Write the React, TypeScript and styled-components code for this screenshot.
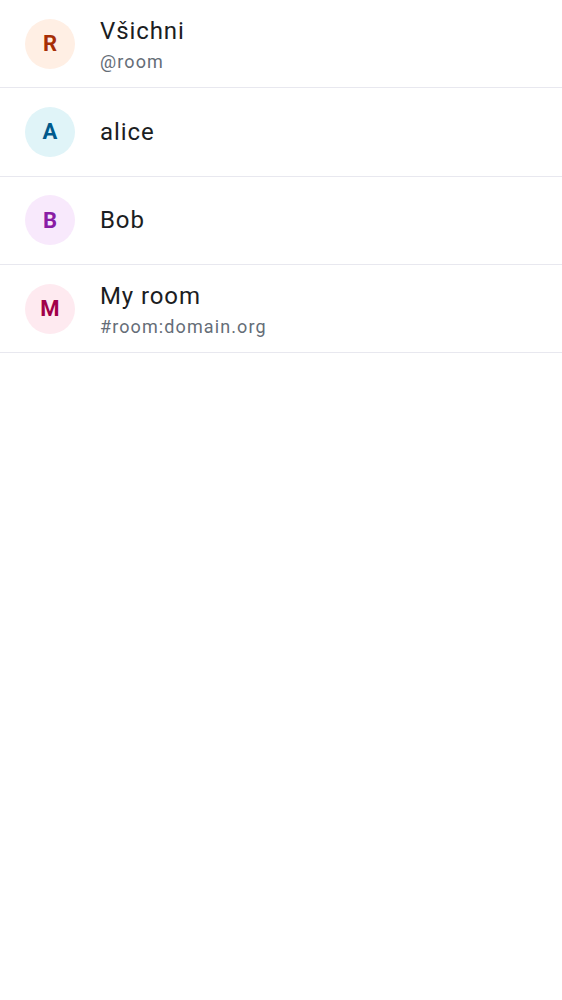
import React from "react";
import styled, { createGlobalStyle } from "styled-components";

const GlobalStyle = createGlobalStyle`
  body {
    margin: 0;
    background: #ffffff;
    font-family: Roboto, "Noto Sans", sans-serif;
  }
`;

const List = styled.ul`
  list-style: none;
  margin: 0;
  padding: 0;
`;

const Row = styled.li`
  display: flex;
  align-items: center;
  gap: 25px;
  height: 88.3px;
  box-sizing: border-box;
  padding: 0 25px;
  border-bottom: 1px solid #e8e8ef;
`;

const Avatar = styled.div<{ $bg: string; $fg: string }>`
  width: 50px;
  height: 50px;
  border-radius: 50%;
  flex-shrink: 0;
  display: flex;
  align-items: center;
  justify-content: center;
  background: ${(p) => p.$bg};
  color: ${(p) => p.$fg};
  font-weight: 700;
  font-size: 22px;
`;

const Texts = styled.div`
  display: flex;
  flex-direction: column;
  gap: 3px;
`;

const Title = styled.div`
  font-size: 24px;
  letter-spacing: 0.9px;
  color: #1b1d22;
  line-height: 28px;
`;

const Subtitle = styled.div`
  font-size: 18px;
  letter-spacing: 1.1px;
  color: #656d77;
  line-height: 22px;
  margin: 3px 0 -3px;
`;

const items = [
  { letter: "R", title: "Všichni", sub: "@room", bg: "#ffefe4", fg: "#a72e05" },
  { letter: "A", title: "alice", bg: "#e0f4f8", fg: "#005a8c" },
  { letter: "B", title: "Bob", bg: "#f8e9fc", fg: "#8a1da5" },
  { letter: "M", title: "My room", sub: "#room:domain.org", bg: "#feeaf0", fg: "#a10048" },
];

const App = () => (
  <>
    <GlobalStyle />
    <List>
      {items.map((it) => (
        <Row key={it.title}>
          <Avatar $bg={it.bg} $fg={it.fg}>{it.letter}</Avatar>
          <Texts>
            <Title>{it.title}</Title>
            {it.sub && <Subtitle>{it.sub}</Subtitle>}
          </Texts>
        </Row>
      ))}
    </List>
  </>
);

export default App;
